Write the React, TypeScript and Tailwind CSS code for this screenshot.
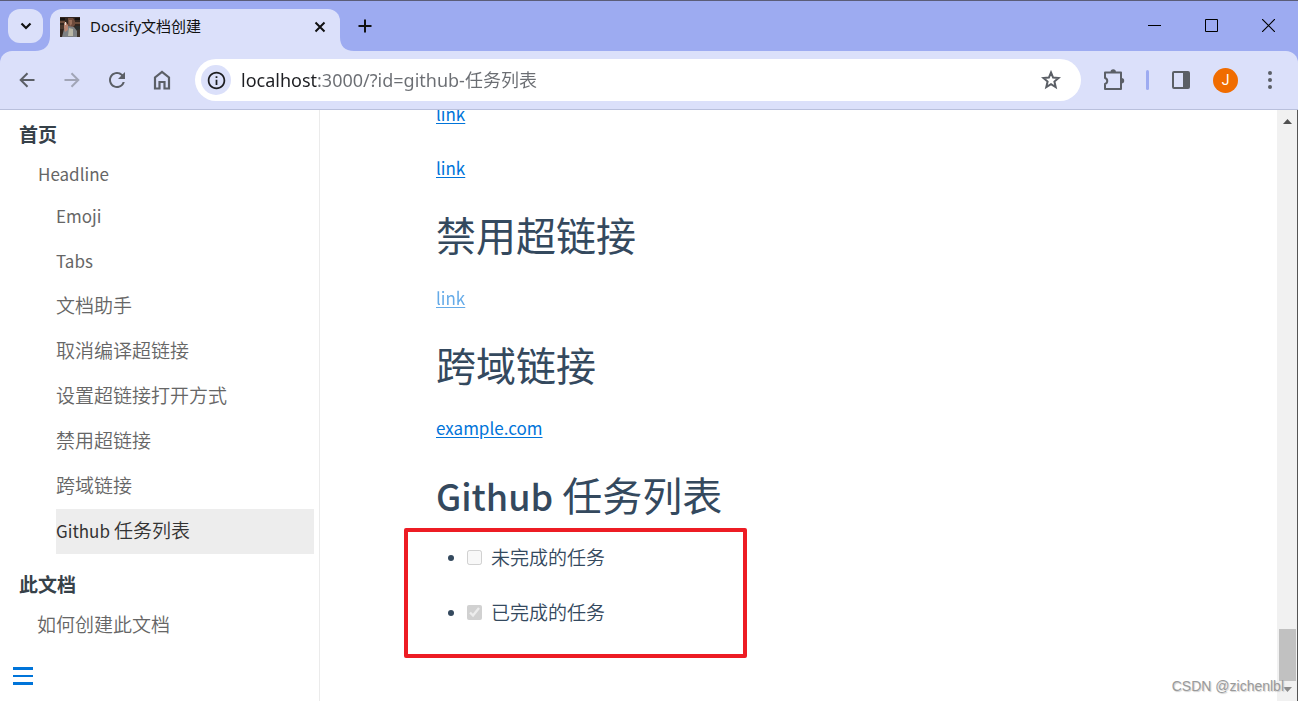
import type { ReactNode } from "react";
import { MdInfoOutline, MdRefresh } from "react-icons/md";

const cjk = "font-['Noto_Sans_CJK_SC',sans-serif]";
const ui = "font-['Noto_Sans','Noto_Sans_CJK_SC',sans-serif]";

function IconButton({ label, children, className = "" }: { label: string; children: ReactNode; className?: string }) {
  return (
    <button type="button" aria-label={label} className={`flex size-9 shrink-0 items-center justify-center text-[#5b5f66] ${className}`}>
      {children}
    </button>
  );
}

function Favicon() {
  return (
    <svg viewBox="0 0 20 20" className="size-5 shrink-0" aria-hidden="true">
      <rect width="20" height="20" fill="#33261f" />
      <path d="M0 1h5v2H0zM15 1h5v2h-5z" fill="#17120f" />
      <path d="M0 4h5v2H0zM15 5h5v2h-5z" fill="#6b4c3a" />
      <path d="M0 8h5l-1 4H0z" fill="#4a372c" />
      <path d="M15 9h5v5h-4z" fill="#2b2f2e" />
      <path d="M8 1h5l2 3v4l-3 3-4-2z" fill="#6f4c3c" />
      <path d="M9 3h3v4l-2 2z" fill="#9a6f5a" />
      <path d="M4 12l4-3 6 1 3 4v6H2z" fill="#7d8083" />
      <path d="M9 11l4 1v7H8z" fill="#b9b7a6" />
      <path d="M4 6l2-1 2 3v5l-3 2-1-4z" fill="#b78470" />
      <path d="M5 5h1v3H5z" fill="#e4d9d0" />
      <path d="M17 13l3-1v8h-3z" fill="#3f342c" />
    </svg>
  );
}

function TitleBar() {
  return (
    <header className="flex h-[51px] shrink-0 items-end border-t border-[#5b5d78] bg-[#9dabf1] pl-2">
      <button type="button" aria-label="Search tabs" className="mb-2 flex h-[34px] w-[35px] items-center justify-center rounded-xl bg-[#dbe0fa]">
        <svg viewBox="0 0 12 8" className="h-2 w-3" fill="none" stroke="#111" strokeWidth="2.2"><path d="M1.5 1.5 6 6l4.500-4.500" /></svg>
      </button>
      <svg viewBox="0 0 7 42" className="h-[42px] w-[7px] shrink-0 overflow-visible" aria-hidden="true"><path d="M7 27C7 37 1 42 -8 42H7Z" fill="#dbe0fa" /></svg>
      <div className="flex h-[42px] w-[290px] items-center rounded-t-xl bg-[#dbe0fa] pr-[10px] pb-[7px] pl-[10px]">
        <Favicon />
        <span className={`ml-[10px] flex-1 text-[15px] text-[#111] ${ui}`}>Docsify文档创建</span>
        <button type="button" aria-label="Close tab" className="flex size-5 items-center justify-center">
          <svg viewBox="0 0 12 12" className="size-3" stroke="#111" strokeWidth="2"><path d="m1.500 1.500 9 9m0-9-9 9" /></svg>
        </button>
      </div>
      <svg viewBox="0 0 14 42" className="h-[42px] w-[14px] shrink-0" aria-hidden="true"><path d="M0 28C0 37 5 42 14 42H0Z" fill="#dbe0fa" /></svg>
      <button type="button" aria-label="New tab" className="mb-[11px] flex h-7 w-[22px] items-center justify-center">
        <svg viewBox="0 0 14 14" className="size-[14px]" stroke="#111" strokeWidth="2"><path d="M7 0.500v13M0.500 7h13" /></svg>
      </button>
      <div className="mr-px mb-1 ml-auto flex">
        <button type="button" aria-label="Minimize" className="flex h-11 w-[57px] items-center justify-center">
          <svg viewBox="0 0 13 13" className="size-[13px]" stroke="#000"><path d="M0 6.500h13" /></svg>
        </button>
        <button type="button" aria-label="Maximize" className="flex h-11 w-[57px] items-center justify-center">
          <svg viewBox="0 0 13 13" className="size-[13px]" fill="none" stroke="#000"><path d="M.5.5h12v12H.5z" /></svg>
        </button>
        <button type="button" aria-label="Close" className="flex h-11 w-[57px] items-center justify-center">
          <svg viewBox="0 0 13 13" className="size-[13px]" stroke="#000" strokeWidth="1.200"><path d="m0 0 13 13M13 0 0 13" /></svg>
        </button>
      </div>
    </header>
  );
}

function Arrow({ className = "" }: { className?: string }) {
  return (
    <svg viewBox="0 0 16 16" className={`size-4 ${className}`} fill="none" stroke="currentColor" strokeWidth="2"><path d="M15.500 8H2M8.500 1.200 1.700 8l6.800 6.800" /></svg>
  );
}

function Toolbar() {
  return (
    <div className="shrink-0 bg-[#9dabf1]">
      <nav className="flex h-[59px] items-center rounded-t-xl border-b border-[#b9c0dc] bg-[#dbe0fa] pl-[9px]">
        <div className="flex gap-[9px]">
          <IconButton label="Back"><Arrow /></IconButton>
          <IconButton label="Forward" className="opacity-45"><Arrow className="rotate-180" /></IconButton>
          <IconButton label="Reload"><MdRefresh size={24} /></IconButton>
          <IconButton label="Home">
            <svg viewBox="0 0 18 20" className="h-5 w-[18px]" fill="none" stroke="currentColor" strokeWidth="2.200"><path d="M2 18.500V7.500L9 2l7 5.500v11h-4.500v-6.500h-5v6.500Z" /></svg>
          </IconButton>
        </div>
        <form className="ml-[15px] flex h-[42px] flex-1 items-center rounded-full bg-white pr-3 pl-[6px]">
          <button type="button" aria-label="Site information" className="flex size-[30px] items-center justify-center rounded-full bg-[#dbe0fa] text-[#1d1e22]">
            <MdInfoOutline size={21} />
          </button>
          <input
            aria-label="Address"
            defaultValue="localhost:3000/?id=github-任务列表"
            className={`ml-[10px] h-8 min-w-0 flex-1 bg-linear-to-r from-[#1d1e22] from-[76px] to-[#6b6e73] to-[76px] bg-clip-text pb-[2px] text-lg text-transparent outline-none ${ui}`}
          />
          <IconButton label="Bookmark">
            <svg viewBox="0 0 20 20" className="size-5" fill="none" stroke="currentColor" strokeWidth="2"><path d="m10 2.500 2.100 5.100 5.500.4-4.200 3.600 1.300 5.400L10 14.100 5.300 17l1.300-5.400L2.400 8l5.500-.4Z" /></svg>
          </IconButton>
        </form>
        <div className="flex items-center pr-[10px] pl-[15px]">
          <IconButton label="Extensions">
            <svg viewBox="0 0 22 22" className="size-[22px]" fill="none" stroke="currentColor" strokeWidth="2">
              <path d="M2 3.500h16V20H2v-5C5 14 5 10 2 9V3.500Z" strokeLinejoin="round" />
              <path d="M7.500 3a2.700 2.700 0 0 1 5.400 0ZM18.500 9a2.700 2.700 0 0 1 0 5.400Z" fill="currentColor" stroke="none" />
            </svg>
          </IconButton>
          <span className="mx-[14px] h-5 w-[3px] rounded-full bg-[#9dabf1]" />
          <IconButton label="Side panel">
            <svg viewBox="0 0 18 18" className="size-[18px]"><rect x="1" y="1" width="16" height="16" rx="1" fill="none" stroke="currentColor" strokeWidth="2" /><path d="M11 1h6v16h-6z" fill="currentColor" /></svg>
          </IconButton>
          <button type="button" aria-label="Profile" className="mx-[14px] flex size-[25px] items-center justify-center rounded-full bg-[#f06c00] font-[Roboto,sans-serif] text-sm text-white">J</button>
          <IconButton label="Menu">
            <svg viewBox="0 0 4 18" className="h-[18px] w-1" fill="currentColor"><circle cx="2" cy="2" r="2" /><circle cx="2" cy="9" r="2" /><circle cx="2" cy="16" r="2" /></svg>
          </IconButton>
        </div>
      </nav>
    </div>
  );
}

const sections = ["Emoji", "Tabs", "文档助手", "取消编译超链接", "设置超链接打开方式", "禁用超链接", "跨域链接"];

function Sidebar() {
  return (
    <aside className={`flex w-80 shrink-0 flex-col border-r border-[#ebebeb] pt-1 pr-[5px] pb-4 text-[19px] font-[350] text-[#505d6b] ${cjk}`}>
      <nav>
        <p className="flex h-10 items-center pl-[19px] font-bold text-[#364149]">首页</p>
        <a href="#headline" className="flex h-10 items-center pl-[38px] text-[17px] font-normal text-[#666]">Headline</a>
        <ul className="pl-14 text-[#666]">
          {sections.map((name, i) => (
            <li key={name}>
              <a href={`#${name}`} className={`flex h-[45px] items-center pb-[2px] ${i < 2 ? "text-[17px] font-normal" : ""}`}>{name}</a>
            </li>
          ))}
          <li>
            <a href="#github" aria-current="true" className="flex h-[45px] items-center gap-1 bg-[#ededed] pb-[2px] text-[#333]">
              <span className="text-[17px] font-normal">Github</span> 任务列表
            </a>
          </li>
        </ul>
        <p className="mt-[10px] flex h-10 items-center pl-[19px] font-bold text-[#364149]">此文档</p>
        <a href="#create" className="flex h-10 items-center pl-[37px] text-[#666]">如何创建此文档</a>
      </nav>
      <button type="button" aria-label="Toggle sidebar" className="mt-auto ml-[13px] flex h-[18px] w-5 flex-col justify-between">
        <span className="h-[3px] w-full bg-[#0074d9]" />
        <span className="h-[2px] w-full bg-[#0074d9]" />
        <span className="h-[3px] w-full bg-[#0074d9]" />
      </button>
    </aside>
  );
}

function Paragraph({ children, className = "" }: { children: ReactNode; className?: string }) {
  return (
    <p className={`text-[17px] leading-7 ${className}`}>
      <a href="#link" className="text-[#0074d9] underline underline-offset-2">{children}</a>
    </p>
  );
}

function Task({ id, label, done = false }: { id: string; label: string; done?: boolean }) {
  return (
    <li className="flex h-[55px] items-center">
      <span className="size-[6px] rounded-full bg-[#34495e]" />
      <input id={id} type="checkbox" disabled defaultChecked={done} className="ml-[13px] size-[15px]" />
      <label htmlFor={id} className="ml-[9px] text-[19px] font-[350]">{label}</label>
    </li>
  );
}

function Content() {
  const heading = "mt-7 text-[40px] leading-[48px] font-normal";
  return (
    <main className={`min-w-0 flex-1 overflow-hidden pl-[116px] text-[#34495e] ${cjk}`}>
      <Paragraph className="-mt-[10px]">link</Paragraph>
      <Paragraph className="mt-[26px]">link</Paragraph>
      <h1 className={heading}>禁用超链接</h1>
      <Paragraph className="mt-[26px] opacity-60">link</Paragraph>
      <h1 className={heading}>跨域链接</h1>
      <Paragraph className="mt-[26px]">example.com</Paragraph>
      <h1 className={heading}><span className="text-[36px] font-medium">Github</span> 任务列表</h1>
      <div className="mt-[9px] -ml-8 h-[130px] w-[343px] rounded-xs border-4 border-[#ed1c24] pl-10">
        <ul className="-mt-[2px]">
          <Task id="open-task" label="未完成的任务" />
          <Task id="done-task" label="已完成的任务" done />
        </ul>
      </div>
    </main>
  );
}

function Scrollbar() {
  return (
    <div className="flex w-[21px] shrink-0 flex-col items-center border-r border-[#555] bg-[#f1f1f1] py-[9px]" aria-hidden="true">
      <svg viewBox="0 0 9 5" className="h-[5px] w-[9px]" fill="#505050"><path d="M0 5 4.500 0 9 5Z" /></svg>
      <div className="mt-auto h-[52px] w-[17px] bg-[#c1c1c1]" />
      <svg viewBox="0 0 9 5" className="mt-[6px] h-[5px] w-[9px]" fill="#8b8b8b"><path d="M0 0 4.500 5 9 0Z" /></svg>
    </div>
  );
}

export default function App() {
  return (
    <div className="relative flex h-screen flex-col overflow-hidden bg-white">
      <TitleBar />
      <Toolbar />
      <div className="flex min-h-0 flex-1">
        <Sidebar />
        <Content />
        <Scrollbar />
      </div>
      <p className="absolute right-[14px] bottom-[5px] font-['Liberation_Sans',sans-serif] text-sm text-[#9a9a9a] [text-shadow:1px_1px_1px_#d0d0d0]">CSDN @zichenlbl</p>
    </div>
  );
}
